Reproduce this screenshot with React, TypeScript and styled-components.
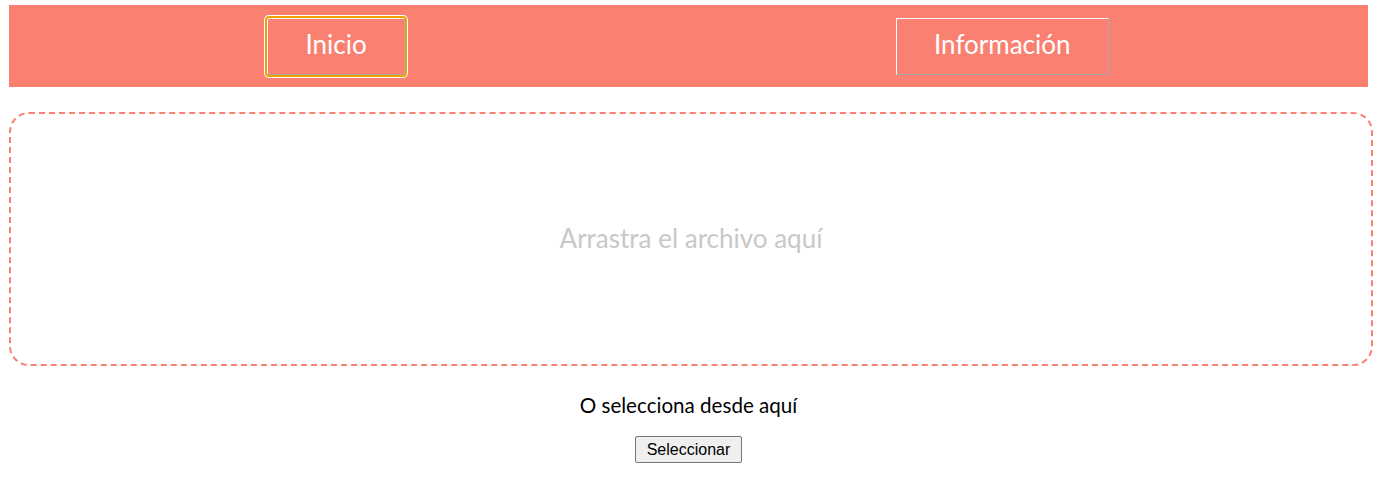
import React from "react";
import styled, { createGlobalStyle } from "styled-components";

const Global = createGlobalStyle`
  html, body { margin: 0; padding: 0; background: #fff; }
  body { font-family: "Lato", "Open Sans", sans-serif; }
`;

const Page = styled.div`
  display: flex;
  flex-direction: column;
  padding: 5px 1px 0 9px;
`;

const Header = styled.nav`
  display: flex;
  justify-content: space-between;
  align-items: center;
  background: #fa8072;
  height: 82px;
  margin-right: 5px;
  padding: 0 259px 0 258px;
  box-sizing: border-box;
`;

const NavButton = styled.button<{ $active?: boolean }>`
  height: 57px;
  padding: 0 37.5px 4px;
  background: transparent;
  color: #fff;
  font-family: "Lato", "Open Sans", sans-serif;
  font-size: 26px;
  line-height: 30px;
  border: 1px solid;
  border-color: #fff #a9a9a9 #a9a9a9 #fff;
  border-radius: ${(p) => (p.$active ? "2px" : "0")};
  cursor: pointer;
  outline: ${(p) => (p.$active ? "2px solid #f0a000" : "none")};
  box-shadow: ${(p) => (p.$active ? "0 0 0 3px #fff" : "none")};
`;

const DropZone = styled.div`
  margin-top: 25px;
  height: 254px;
  box-sizing: border-box;
  border: 2px dashed #fa8072;
  border-radius: 20px;
  display: flex;
  align-items: center;
  justify-content: center;
`;

const DropText = styled.span`
  color: #c8c8c8;
  font-size: 26px;
  line-height: 30px;
  padding-bottom: 2px;
`;

const Picker = styled.div`
  display: flex;
  flex-direction: column;
  align-items: center;
  margin-right: 5px;
`;

const Hint = styled.p`
  margin: 27px 0 0;
  font-size: 20.6px;
  line-height: 24px;
  color: #000;
`;

const PickButton = styled.button`
  margin-top: 19px;
  font-family: "Liberation Sans", Arial, sans-serif;
  font-size: 16px;
  padding: 2px 11px;
  height: 27px;
  background: #efefef;
  color: #000;
  border: 1px solid #767676;
  border-radius: 2px;
`;

export default function App() {
  return (
    <>
      <Global />
      <Page>
        <Header>
          <NavButton $active>Inicio</NavButton>
          <NavButton>Información</NavButton>
        </Header>
        <DropZone>
          <DropText>Arrastra el archivo aquí</DropText>
        </DropZone>
        <Picker>
          <Hint>O selecciona desde aquí</Hint>
          <PickButton>Seleccionar</PickButton>
        </Picker>
      </Page>
    </>
  );
}
